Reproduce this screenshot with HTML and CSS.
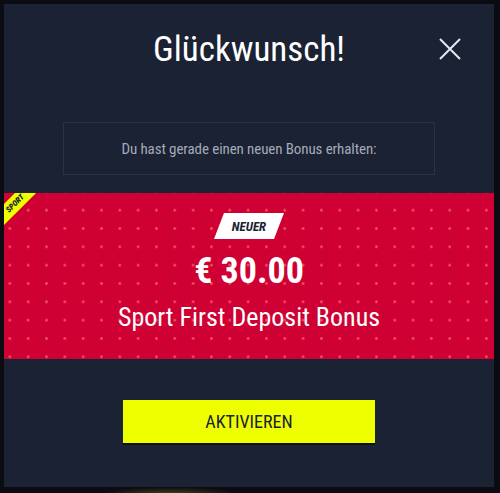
FILE: index.html
```html
<!doctype html>
<html lang="de">
<head>
  <meta charset="UTF-8"/>
  <meta content="width=device-width, initial-scale=1" name="viewport">
  <title>Bonus</title>
  <link rel="stylesheet" href="styles.css">
</head>
<body>
<div class="backdrop">
  <div class="modal">
    <div class="modal-head">
      <h1 class="title">Glückwunsch!</h1>
      <button class="close" aria-label="Schließen">
        <svg width="24" height="24" viewBox="0 0 24 24">
          <path d="M2 2 L22 22 M22 2 L2 22" stroke="#e6e9ef" stroke-width="2" fill="none"/>
        </svg>
      </button>
    </div>
    <div class="info">Du hast gerade einen neuen Bonus erhalten:</div>
    <div class="bonus">
      <div class="ribbon">SPORT</div>
      <div class="badge"><span>NEUER</span></div>
      <div class="amount">€ 30.00</div>
      <div class="bonus-name">Sport First Deposit Bonus</div>
    </div>
    <div class="actions">
      <button class="activate">AKTIVIEREN</button>
    </div>
  </div>
  <div class="glow"></div>
</div>
</body>
</html>
```

FILE: styles.css
```css
*, *:before {
  box-sizing: border-box;
}

html, body {
  margin: 0;
  height: 100%;
}

body {
  background: #0a0c11;
  font-family: Roboto, "Liberation Sans", sans-serif;
  font-stretch: 80%;
  overflow: hidden;
}

.backdrop {
  position: relative;
  padding: 4px 6px 6px 4px;
}

.modal {
  width: 490px;
  height: 483px;
  background: #1b2233;
  display: flex;
  flex-direction: column;
}

.modal-head {
  position: relative;
  height: 118px;
  display: flex;
  justify-content: center;
}

.title {
  margin: 26px 0 0;
  color: #fff;
  font-size: 35px;
  font-weight: 400;
  line-height: 40px;
}

.close {
  position: absolute;
  top: 33px;
  right: 32px;
  padding: 0;
  background: none;
  border: 0;
  line-height: 0;
}

.info {
  margin: 0 59px;
  height: 53px;
  border: 1px solid #2a3244;
  display: flex;
  align-items: center;
  justify-content: center;
  color: #a4abb9;
  font-size: 15px;
  letter-spacing: -0.1px;
}

.bonus {
  position: relative;
  overflow: hidden;
  margin-top: 18px;
  height: 166px;
  background-color: #cf0033;
  background-image: radial-gradient(circle, rgba(255, 140, 100, .6) 0, rgba(255, 140, 100, .6) 1px, transparent 1.6px);
  background-size: 18.33px 18.33px;
  background-position: 15px 8px;
  display: flex;
  flex-direction: column;
  align-items: center;
  color: #fff;
}

.ribbon {
  position: absolute;
  top: 3px;
  left: -19px;
  width: 60px;
  height: 15px;
  background: #eeff00;
  color: #1b2233;
  font-size: 8px;
  font-weight: 900;
  font-style: italic;
  line-height: 15px;
  text-align: center;
  transform: rotate(-45deg);
}

.badge {
  margin-top: 20px;
  width: 60px;
  height: 26px;
  background: #fff;
  transform: skewX(-21deg);
  display: flex;
  align-items: center;
  justify-content: center;
}

.badge span {
  transform: skewX(21deg);
  color: #1b2233;
  font-size: 13px;
  font-weight: 700;
  font-style: italic;
}

.amount {
  margin-top: 11px;
  font-size: 36px;
  font-weight: 700;
  line-height: 42px;
}

.bonus-name {
  margin-top: 10px;
  font-size: 26px;
  line-height: 30px;
}

.actions {
  flex: 1;
  display: flex;
  justify-content: center;
  padding-top: 41px;
}

.activate {
  width: 252px;
  height: 43px;
  background: #eeff00;
  border: 0;
  box-shadow: 0 2px 0 #0d1018;
  color: #1b2233;
  font-family: Roboto, "Liberation Sans", sans-serif;
  font-stretch: 80%;
  font-size: 18px;
}

.glow {
  position: absolute;
  left: 100px;
  top: 487px;
  width: 140px;
  height: 14px;
  border-radius: 50%;
  background: radial-gradient(ellipse, rgba(120, 120, 40, .5), transparent 70%);
}
```
